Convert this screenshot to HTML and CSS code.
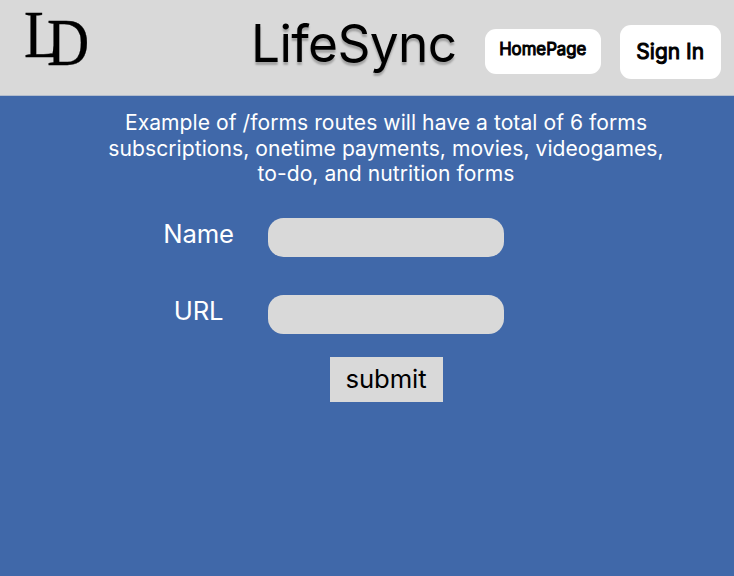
FILE: index.html
```html
<!DOCTYPE html>
<html lang="en">
<head>
<meta charset="utf-8">
<title>LifeSync</title>
<link rel="stylesheet" href="styles.css">
</head>
<body>
<header class="header">
  <div class="logo" aria-label="LD"><span class="logo-l">L</span><span class="logo-d">D</span></div>
  <h1 class="title">LifeSync</h1>
  <nav class="nav">
    <a class="button home">HomePage</a>
    <a class="button signin">Sign In</a>
  </nav>
</header>
<main class="main">
  <p class="intro">Example of /forms routes will have a total of 6 forms<br>subscriptions, onetime payments, movies, videogames,<br>to-do, and nutrition forms</p>
  <form class="form">
    <label class="label" for="name">Name</label>
    <input class="field" id="name">
    <label class="label" for="url">URL</label>
    <input class="field" id="url">
    <button class="submit" type="button">submit</button>
  </form>
</main>
</body>
</html>
```
FILE: styles.css
```css
* { box-sizing: border-box; }
body {
  margin: 0;
  min-height: 576px;
  background: #4068a9;
  color: #fff;
  font-family: Inter, sans-serif;
}
.header {
  display: flex;
  height: 96px;
  border-bottom: 1px solid #b3bdcd;
  background: #d9d9d9;
  color: #000;
}
.logo {
  display: flex;
  width: 251px;
  padding-left: 23.5px;
  font: 68px/72px "Liberation Serif", serif;
  -webkit-text-stroke: .3px #000;
}
.logo-l, .logo-d { transform: scaleX(.86); transform-origin: left top; }
.logo-l { margin-top: -2px; }
.logo-d { margin: 6px 0 0 -18.5px; }
.title {
  width: 233.5px;
  margin: 11px 0 0;
  font-size: 51.4px;
  line-height: 64px;
  font-weight: 400;
  letter-spacing: -.65px;
  text-shadow: 0 3px 2px rgba(0, 0, 0, .25);
}
.nav { display: flex; align-items: flex-start; gap: 19px; }
.button {
  display: flex;
  justify-content: center;
  align-items: center;
  background: #fff;
  border-radius: 11px;
  font-weight: 400;
  -webkit-text-stroke: 1px #000;
}
.home { width: 116.5px; height: 45px; margin-top: 29px; padding-bottom: 5px; font-size: 16.8px; }
.signin { width: 100.5px; height: 54px; margin-top: 25px; padding-bottom: 1px; font-size: 21px; }
.intro {
  width: 600px;
  margin: 0 0 0 86px;
  padding-top: 14px;
  font-size: 21.1px;
  font-weight: 370;
  line-height: 25.6px;
  letter-spacing: .05px;
  text-align: center;
}
.form {
  display: grid;
  grid-template-columns: 140px 236px;
  grid-template-rows: 39px 39px 45px;
  row-gap: 38px;
  margin: 31px 0 0 128px;
}
.label { padding-left: 1px; font-size: 25.7px; font-weight: 380; line-height: 31px; letter-spacing: -.25px; text-align: center; }
.field {
  width: 236px;
  height: 39px;
  border: 0;
  border-radius: 15.5px;
  background: #d9d9d9;
}
.submit {
  grid-column: 2;
  justify-self: center;
  width: 113px;
  height: 45px;
  margin-top: -15px;
  padding: 0 0 1px;
  border: 0;
  background: #d9d9d9;
  color: #000;
  font: 25.7px/31px Inter, sans-serif;
  letter-spacing: -.1px;
}
```
